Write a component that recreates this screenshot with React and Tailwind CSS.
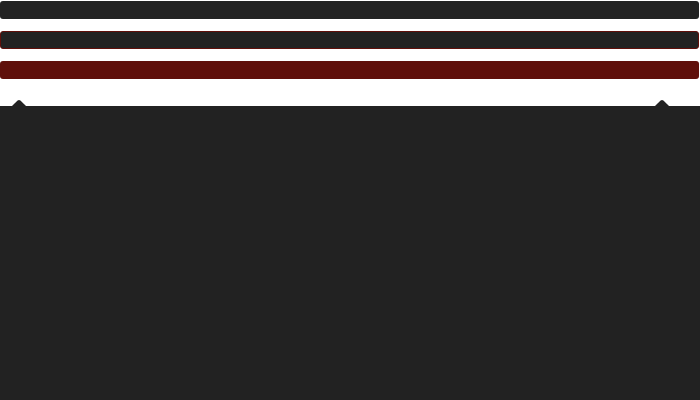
export default function App() {
  return (
    <div className="w-[700px] h-[400px] bg-white overflow-hidden flex flex-col">
      <div className="pt-px pr-px flex flex-col gap-3">
        <div className="h-[18px] rounded-[3px] bg-[#222222]" />
        <div className="h-[18px] rounded-[3px] bg-[#222222] border border-[#5f0f0a]" />
        <div className="h-[18px] rounded-[3px] bg-[#5f0f0a]" />
      </div>
      <div className="relative mt-[27px] flex-1 bg-[#222222]">
        <div className="absolute -top-[6px] left-[12px] w-[14px] h-[6px]">
          <svg width="14" height="6" viewBox="0 0 14 6">
            <path d="M0 6 L5.6 0.6 Q7 -0.4 8.4 0.6 L14 6 Z" fill="#222222" />
          </svg>
        </div>
        <div className="absolute -top-[6px] left-[655px] w-[14px] h-[6px]">
          <svg width="14" height="6" viewBox="0 0 14 6">
            <path d="M0 6 L5.6 0.6 Q7 -0.4 8.4 0.6 L14 6 Z" fill="#222222" />
          </svg>
        </div>
      </div>
    </div>
  );
}
